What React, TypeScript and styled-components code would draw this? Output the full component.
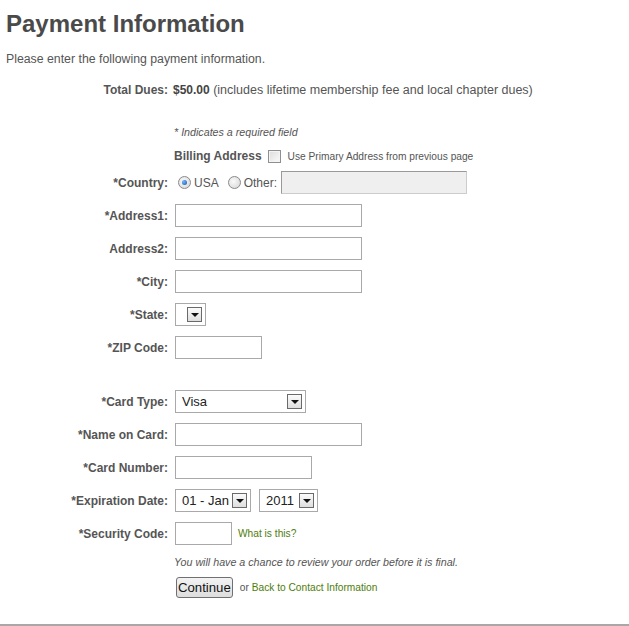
import React from 'react';
import styled, { createGlobalStyle } from 'styled-components';

const GlobalStyle = createGlobalStyle`
  html, body {
    margin: 0;
    padding: 0;
    background: #fff;
  }
  body {
    font-family: "Liberation Sans", Arial, sans-serif;
    color: #555;
  }
`;

const Page = styled.div`
  width: 629px;
  height: 626px;
  position: relative;
  overflow: hidden;
`;

const Title = styled.h1`
  margin: 10px 0 0 6px;
  font-size: 24px;
  line-height: 28px;
  font-weight: bold;
  color: #4a4a4a;
`;

const Intro = styled.p`
  margin: 14px 0 0 6px;
  font-size: 12.3px;
  line-height: 14px;
`;

const Row = styled.div<{ $top: number; $height?: number }>`
  display: flex;
  align-items: center;
  margin-top: ${(p) => p.$top}px;
  height: ${(p) => p.$height ?? 23}px;
`;

const Label = styled.label`
  width: 168px;
  flex: none;
  text-align: right;
  font-size: 12px;
  font-weight: bold;
  color: #555;
  margin-right: 7px;
  white-space: nowrap;
`;

const Value = styled.span`
  font-size: 12.5px;
  color: #555;
  margin-left: -2px;
  b {
    color: #444;
    font-size: 12px;
  }
`;

const Indent = styled.div<{ $top: number }>`
  margin: ${(p) => p.$top}px 0 0 174px;
  display: flex;
  align-items: center;
`;

const Note = styled.span`
  font-size: 10.7px;
  font-style: italic;
  color: #555;
  line-height: 12px;
`;

const Section = styled.span`
  font-size: 12px;
  font-weight: bold;
  color: #555;
`;

const Small = styled.span`
  font-size: 10.2px;
  color: #555;
`;

const Checkbox = styled.span`
  width: 11px;
  height: 11px;
  border: 1px solid #8f8f8f;
  background: linear-gradient(135deg, #dcdcdc, #fbfbfb);
  box-shadow: inset 0 0 0 1px #f4f4f4;
  margin: 0 7px 0 6px;
  flex: none;
`;

const Radio = styled.span<{ $checked?: boolean }>`
  width: 11px;
  height: 11px;
  border-radius: 50%;
  border: 1px solid #8a8a8a;
  background: radial-gradient(circle at 40% 40%, #fafafa, #d4d4d4);
  margin: 0 3px 0 3px;
  flex: none;
  display: inline-flex;
  align-items: center;
  justify-content: center;
  &::after {
    content: '';
    display: ${(p) => (p.$checked ? 'block' : 'none')};
    width: 5px;
    height: 5px;
    border-radius: 50%;
    background: radial-gradient(circle at 35% 35%, #6fb6ff, #1553a8);
  }
`;

const RadioText = styled.span`
  font-size: 12px;
  color: #555;
  margin-right: 6px;
`;

const TextInput = styled.span<{ $w: number; $disabled?: boolean }>`
  display: block;
  box-sizing: border-box;
  width: ${(p) => p.$w}px;
  height: 23px;
  border: 1px solid #a9a9a9;
  background: ${(p) => (p.$disabled ? '#efefef' : '#fff')};
  ${(p) => (p.$disabled ? 'border-color: #999 #ccc #ccc #999; margin-left: -2px;' : '')}
  flex: none;
`;

const Select = styled.span<{ $w: number; $gap?: number }>`
  box-sizing: border-box;
  width: ${(p) => p.$w}px;
  height: 23px;
  border: 1px solid #a9a9a9;
  background: #fff;
  display: flex;
  align-items: center;
  justify-content: space-between;
  padding: 0 3px 0 6px;
  margin-left: ${(p) => p.$gap ?? 0}px;
  font-size: 13px;
  color: #222;
  flex: none;
`;

const Arrow = styled.span`
  box-sizing: border-box;
  width: 15px;
  height: 15px;
  border: 1px solid #6a6a6a;
  background: linear-gradient(#fbfbfb, #dedede);
  display: flex;
  align-items: center;
  justify-content: center;
  margin-left: auto;
  &::after {
    content: '';
    border-left: 4px solid transparent;
    border-right: 4px solid transparent;
    border-top: 4px solid #111;
    margin-top: 1px;
  }
`;

const Link = styled.a<{ $gap?: number }>`
  font-size: 10.2px;
  color: #4f7d0c;
  text-decoration: none;
  margin-left: ${(p) => p.$gap ?? 0}px;
`;

const Button = styled.button`
  font-family: "Liberation Sans", Arial, sans-serif;
  font-size: 13.2px;
  color: #111;
  height: 21px;
  padding: 0 1px;
  border: 1px solid #707070;
  border-radius: 3px;
  background: linear-gradient(#f3f3f3, #dddddd);
  margin: 0 7px 0 2px;
  line-height: 17px;
`;

const Rule = styled.div`
  position: absolute;
  left: 0;
  right: 0;
  bottom: 0;
  height: 2px;
  background: #a8a8a8;
`;

const SelectField: React.FC<{ w: number; value?: string; gap?: number }> = ({ w, value, gap }) => (
  <Select $w={w} $gap={gap}>
    {value}
    <Arrow />
  </Select>
);

const App: React.FC = () => {
  return (
    <Page>
      <GlobalStyle />
      <Title>Payment Information</Title>
      <Intro>Please enter the following payment information.</Intro>

      <Row $top={17} $height={14}>
        <Label>Total Dues:</Label>
        <Value>
          <b>$50.00</b> (includes lifetime membership fee and local chapter dues)
        </Value>
      </Row>

      <Indent $top={29}>
        <Note>* Indicates a required field</Note>
      </Indent>
      <Indent $top={11}>
        <Section>Billing Address</Section>
        <Checkbox />
        <Small>Use Primary Address from previous page</Small>
      </Indent>

      <Row $top={8}>
        <Label>*Country:</Label>
        <Radio $checked />
        <RadioText>USA</RadioText>
        <Radio />
        <RadioText>Other:</RadioText>
        <TextInput $w={186} $disabled />
      </Row>
      <Row $top={10}>
        <Label>*Address1:</Label>
        <TextInput $w={187} />
      </Row>
      <Row $top={10}>
        <Label>Address2:</Label>
        <TextInput $w={187} />
      </Row>
      <Row $top={10}>
        <Label>*City:</Label>
        <TextInput $w={187} />
      </Row>
      <Row $top={10}>
        <Label>*State:</Label>
        <SelectField w={31} />
      </Row>
      <Row $top={10}>
        <Label>*ZIP Code:</Label>
        <TextInput $w={87} />
      </Row>

      <Row $top={31}>
        <Label>*Card Type:</Label>
        <SelectField w={131} value="Visa" />
      </Row>
      <Row $top={10}>
        <Label>*Name on Card:</Label>
        <TextInput $w={187} />
      </Row>
      <Row $top={10}>
        <Label>*Card Number:</Label>
        <TextInput $w={137} />
      </Row>
      <Row $top={10}>
        <Label>*Expiration Date:</Label>
        <SelectField w={76} value="01 - Jan" />
        <SelectField w={59} value="2011" gap={8} />
      </Row>
      <Row $top={10}>
        <Label>*Security Code:</Label>
        <TextInput $w={57} />
        <Link href="#" $gap={6}>What is this?</Link>
      </Row>

      <Indent $top={11}>
        <Note>You will have a chance to review your order before it is final.</Note>
      </Indent>
      <Indent $top={9}>
        <Button type="button">Continue</Button>
        <Small>or&nbsp;</Small>
        <Link href="#">Back to Contact Information</Link>
      </Indent>

      <Rule />
    </Page>
  );
};

export default App;
